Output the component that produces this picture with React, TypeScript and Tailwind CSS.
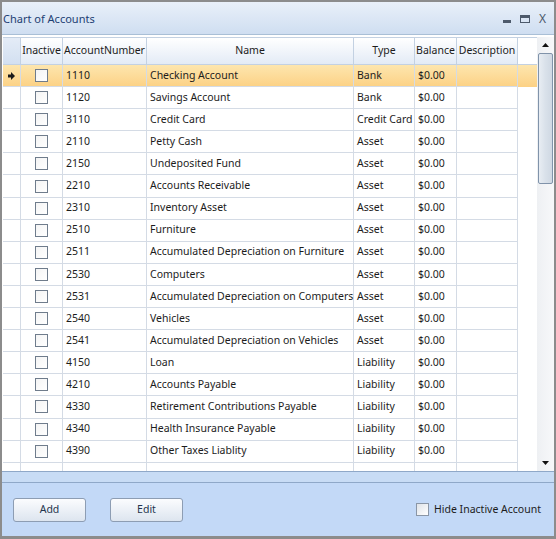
import React from 'react';

const accounts = [
  { num: '1110', name: 'Checking Account', type: 'Bank' },
  { num: '1120', name: 'Savings Account', type: 'Bank' },
  { num: '3110', name: 'Credit Card', type: 'Credit Card' },
  { num: '2110', name: 'Petty Cash', type: 'Asset' },
  { num: '2150', name: 'Undeposited Fund', type: 'Asset' },
  { num: '2210', name: 'Accounts Receivable', type: 'Asset' },
  { num: '2310', name: 'Inventory Asset', type: 'Asset' },
  { num: '2510', name: 'Furniture', type: 'Asset' },
  { num: '2511', name: 'Accumulated Depreciation on Furniture', type: 'Asset' },
  { num: '2530', name: 'Computers', type: 'Asset' },
  { num: '2531', name: 'Accumulated Depreciation on Computers', type: 'Asset' },
  { num: '2540', name: 'Vehicles', type: 'Asset' },
  { num: '2541', name: 'Accumulated Depreciation on Vehicles', type: 'Asset' },
  { num: '4150', name: 'Loan', type: 'Liability' },
  { num: '4210', name: 'Accounts Payable', type: 'Liability' },
  { num: '4330', name: 'Retirement Contributions Payable', type: 'Liability' },
  { num: '4340', name: 'Health Insurance Payable', type: 'Liability' },
  { num: '4390', name: 'Other Taxes Liablity', type: 'Liability' },
];

const cols = 'grid grid-cols-[18px_42px_84px_207px_61px_42px_61px]';

const Box = () => (
  <span className="block h-[13px] w-[13px] border border-[#6f7c8c] bg-gradient-to-br from-[#f4f4f4] to-white" />
);

export default function App() {
  return (
    <div
      className="flex h-[539px] w-[556px] flex-col overflow-hidden border-x-[2px] border-t-[2px] border-b-[3px] border-[#8c8c8c] bg-white text-[10.5px] text-[#1c1c1c]"
      style={{ fontFamily: '"Noto Sans", "Open Sans", sans-serif' }}
    >
      {/* title bar */}
      <div className="flex h-[33px] shrink-0 items-center justify-between border-b border-[#a9bfd6] bg-gradient-to-b from-[#e9f0f9] to-[#cfdef1] pl-[1px] pr-[8px] pt-[2px]">
        <span className="text-[11px] text-[#1d3f73]">Chart of Accounts</span>
        <div className="flex items-center gap-[9px] text-[#4d5a6b]">
          <span className="mt-[4px] block h-[3px] w-[8px] bg-[#4d5a6b]" />
          <span className="block h-[8px] w-[10px] border border-t-[3px] border-[#4d5a6b]" />
          <span className="text-[12px] leading-none">X</span>
        </div>
      </div>

      {/* grid */}
      <div className="flex min-h-0 flex-1 pt-[2px]">
        <div className="min-w-0 flex-1 overflow-hidden pl-[1px]">
          <div className={`${cols} h-[28px] items-center border-y border-[#c3d1e2] text-center`}>
            <div className="h-full border-r border-[#c3d1e2] bg-gradient-to-b from-[#e4ecf7] to-[#d3e0f1]" />
            {['Inactive', 'AccountNumber', 'Name', 'Type', 'Balance', 'Description'].map((h) => (
              <div
                key={h}
                className="flex h-full items-center justify-center border-r border-[#c3d1e2] bg-gradient-to-b from-white to-[#e3ebf6] whitespace-nowrap"
              >
                {h}
              </div>
            ))}
          </div>
          {[...accounts, null].map((a, i) => {
            const sel = i === 0;
            return (
              <div
                key={i}
                className={`${cols} h-[22.1px] items-center ${
                  sel ? 'bg-gradient-to-b from-[#fde6ae] to-[#fcd184]' : ''
                }`}
              >
                <div className="flex h-full items-center justify-center border-r border-b border-[#d4dbe5]">
                  {sel && (
                    <svg width="7" height="8" viewBox="0 0 7 8">
                      <path d="M0 2.5h3V0l4 4-4 4V5.5H0z" fill="#1a1a1a" />
                    </svg>
                  )}
                </div>
                <div className="flex h-full items-center justify-center border-r border-b border-[#d4dbe5]">
                  {a && <Box />}
                </div>
                <div className="flex h-full items-center border-r border-b border-[#d4dbe5] pl-[3px]">{a?.num}</div>
                <div className="flex h-full items-center whitespace-nowrap border-r border-b border-[#d4dbe5] pl-[3px]">
                  {a?.name}
                </div>
                <div className="flex h-full items-center whitespace-nowrap border-r border-b border-[#d4dbe5] pl-[3px]">
                  {a?.type}
                </div>
                <div className="flex h-full items-center border-r border-b border-[#d4dbe5] pl-[3px]">
                  {a && '$0.00'}
                </div>
                <div className="h-full border-r border-b border-[#d4dbe5]" />
              </div>
            );
          })}
        </div>

        {/* scrollbar */}
        <div className="flex w-[17px] shrink-0 flex-col items-center bg-gradient-to-r from-[#eef0f3] to-[#f7f8fa] py-[4px]">
          <svg width="7" height="4" viewBox="0 0 7 4" className="mt-[2px]">
            <path d="M3.5 0L7 4H0z" fill="#111" />
          </svg>
          <div className="mt-[6px] h-[131px] w-[15px] rounded-[2px] border border-[#8093aa] bg-gradient-to-r from-[#e8edf3] via-[#d9e1ea] to-[#cfd8e3]" />
          <div className="flex-1" />
          <svg width="7" height="4" viewBox="0 0 7 4" className="mb-[2px]">
            <path d="M0 0h7L3.5 4z" fill="#111" />
          </svg>
        </div>
      </div>

      {/* bottom panel */}
      <div className="h-[12px] shrink-0 border-y border-[#8fa8c8] bg-[#c8dcf5]" />
      <div className="flex h-[53px] shrink-0 items-center bg-[#c3d9f7] pl-[11px] pr-[13px]">
        <button className="h-[24px] w-[73px] rounded-[3px] border border-[#8d9db3] bg-gradient-to-b from-[#fbfcfe] to-[#dde5ef] text-[10.5px] text-[#24344d]">
          Add
        </button>
        <button className="ml-[24px] h-[24px] w-[73px] rounded-[3px] border border-[#8d9db3] bg-gradient-to-b from-[#fbfcfe] to-[#dde5ef] text-[10.5px] text-[#24344d]">
          Edit
        </button>
        <div className="ml-auto flex items-center gap-[5px]">
          <span className="block h-[13px] w-[13px] border border-[#8a96a6] bg-gradient-to-br from-[#dfe3e8] to-white" />
          <span className="text-[10.5px] text-[#1c1c1c]">Hide Inactive Account</span>
        </div>
      </div>
    </div>
  );
}
